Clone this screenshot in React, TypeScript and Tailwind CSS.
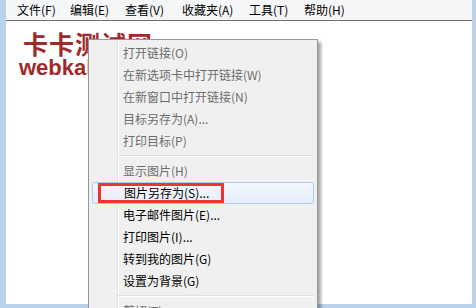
import React from "react";

const font = { fontFamily: '"Noto Sans CJK SC", "Noto Sans", sans-serif' };

type Item = { label: string; disabled?: boolean; selected?: boolean } | "sep";

const items: Item[] = [
  { label: "打开链接(O)", disabled: true },
  { label: "在新选项卡中打开链接(W)", disabled: true },
  { label: "在新窗口中打开链接(N)", disabled: true },
  { label: "目标另存为(A)...", disabled: true },
  { label: "打印目标(P)", disabled: true },
  "sep",
  { label: "显示图片(H)", disabled: true },
  { label: "图片另存为(S)...", selected: true },
  { label: "电子邮件图片(E)..." },
  { label: "打印图片(I)..." },
  { label: "转到我的图片(G)" },
  { label: "设置为背景(G)" },
  "sep",
  { label: "剪切(T)", disabled: true },
];

const menus = [
  { t: "文件(F)", w: "w-[53px]" },
  { t: "编辑(E)", w: "w-[55px]" },
  { t: "查看(V)", w: "w-[57px]" },
  { t: "收藏夹(A)", w: "w-[67px]" },
  { t: "工具(T)", w: "w-[55px]" },
  { t: "帮助(H)", w: "w-[60px]" },
];

export default function App() {
  return (
    <div
      className="relative w-[476px] h-[308px] overflow-hidden bg-[#b9d1ea] pl-[6px] pr-[4px] pb-[4px]"
      style={font}
    >
      <div className="flex h-full flex-col bg-white">
        <div className="flex h-[21px] shrink-0 items-center border-b border-[#6e6e6e] bg-[#f5f6f7] pl-[11px] text-[12px] leading-none text-black">
          {menus.map((m) => (
            <div key={m.t} className={`${m.w} shrink-0 whitespace-nowrap`}>
              {m.t}
            </div>
          ))}
        </div>
        <div className="flex flex-col pl-[13px] pt-[9px] text-[#9e2a2b]">
          <div className="pl-[4px] text-[25px] font-bold leading-[26px] tracking-[1px]">卡卡测试网</div>
          <div
            className="pt-[1px] text-[22px] font-bold leading-[22px]"
            style={{ fontFamily: '"Liberation Sans", Arial, sans-serif' }}
          >
            webkaka
          </div>
        </div>
      </div>

      <div className="absolute left-[88px] top-[39px] w-[230px] h-[290px] border border-[#979797] bg-[#f0f0f0] px-[3px] pt-[2px] shadow-[3px_3px_3px_rgba(0,0,0,0.35)]">
        <div className="absolute left-[28px] top-0 bottom-0 w-px bg-[#e2e3e3]" />
        <div className="absolute left-[29px] top-0 bottom-0 w-px bg-white" />
        <div className="relative flex flex-col">
          {items.map((it, i) =>
            it === "sep" ? (
              <div key={i} className="flex h-[8px] flex-col justify-center pl-[26px]">
                <div className="h-px bg-[#e0e0e0]" />
                <div className="h-px bg-white" />
              </div>
            ) : (
              <div
                key={i}
                className={`relative flex h-[22px] items-center pl-[31px] text-[12px] leading-none whitespace-nowrap ${
                  it.disabled ? "text-[#6d6d6d]" : "text-black"
                } ${
                  it.selected
                    ? "rounded-[3px] border border-[#aeccf1] bg-gradient-to-b from-[#f4f8fd] to-[#e6eef9] pl-[30px]"
                    : ""
                }`}
              >
                {it.label}
                {it.selected && (
                  <div className="absolute left-[5px] top-0 h-[20px] w-[126px] border-[3px] border-[#ee3333]" />
                )}
              </div>
            )
          )}
        </div>
      </div>
    </div>
  );
}
